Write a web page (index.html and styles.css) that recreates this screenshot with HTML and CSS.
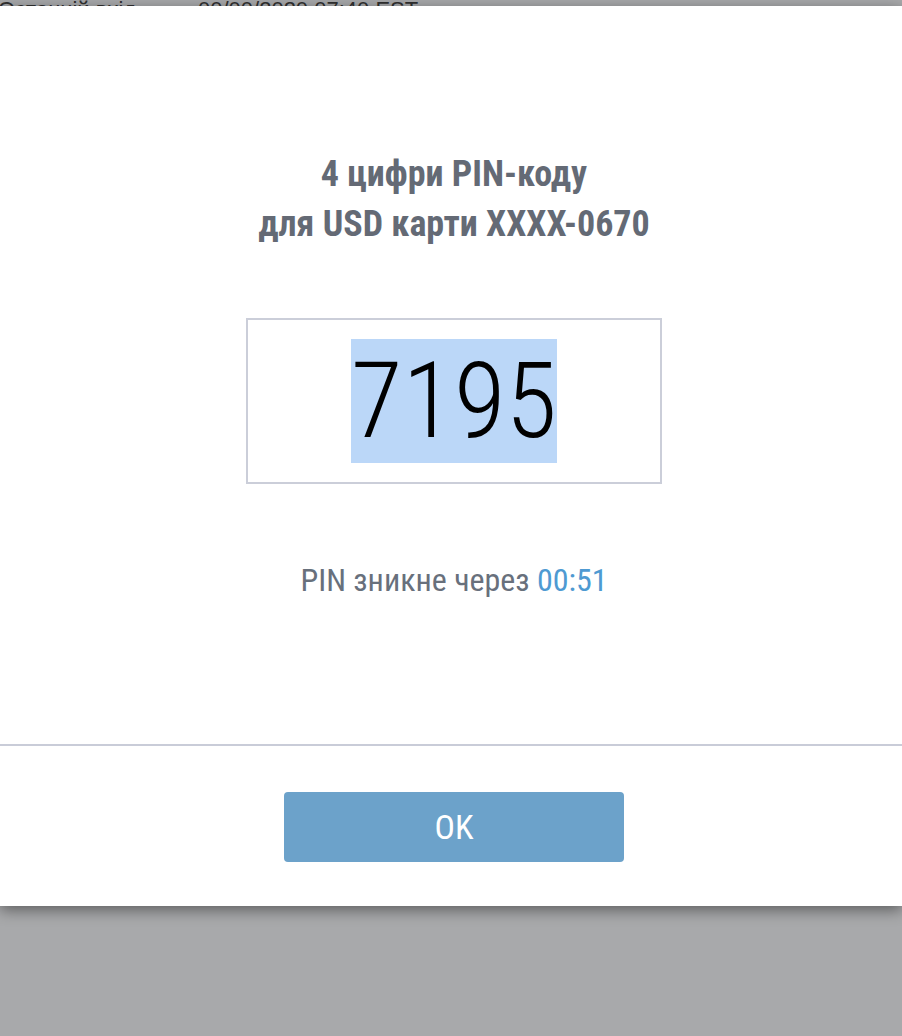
FILE: index.html
```html
<!DOCTYPE html>
<html lang="uk">
<head>
<meta charset="utf-8">
<title>PIN</title>
<link rel="stylesheet" href="styles.css">
</head>
<body>
<div class="page">
  <div class="topline">
    <span class="label">Останній вхід</span>
    <span class="date">00/00/2020 07:40 EST</span>
  </div>
</div>
<div class="modal">
  <div class="modal-body">
    <h2 class="title">4 цифри PIN-коду<br>для USD карти XXXX-0670</h2>
    <div class="pin-box"><span class="pin">7195</span></div>
    <p class="timer">PIN зникне через <span class="time">00:51</span></p>
  </div>
  <div class="modal-footer">
    <button class="ok">OK</button>
  </div>
</div>
</body>
</html>
```

FILE: styles.css
```css
html, body {
  margin: 0;
  padding: 0;
  height: 100%;
  overflow: hidden;
}
body {
  background: #a8a9ab;
  font-family: "Roboto Condensed", "Liberation Sans Narrow", "DejaVu Sans Condensed", Roboto, sans-serif;
}
.page {
  height: 100%;
}
.topline {
  display: flex;
  margin-top: -3px;
  font-family: "Liberation Sans", Arial, sans-serif;
  font-size: 22px;
  color: #303030;
  white-space: nowrap;
}
.label {
  width: 200px;
  margin-left: -2px;
}
.modal {
  position: absolute;
  top: 6px;
  left: 0;
  right: 0;
  height: 900px;
  background: #fff;
  box-shadow: 0 4px 14px rgba(0, 0, 0, 0.45);
  display: flex;
  flex-direction: column;
}
.modal-body {
  height: 740px;
  border-bottom: 2px solid #c9ccd8;
  display: flex;
  flex-direction: column;
  align-items: center;
  padding-left: 6px;
  box-sizing: border-box;
  padding-top: 143px;
}
.title {
  margin: 0;
  font-size: 36px;
  line-height: 50px;
  font-weight: 700;
  color: #646a75;
  text-align: center;
}
.pin-box {
  margin-top: 69px;
  width: 416px;
  height: 166px;
  box-sizing: border-box;
  border: 2px solid #cbced9;
  display: flex;
  align-items: center;
  justify-content: center;
}
.pin {
  font-size: 106px;
  font-weight: 300;
  color: #000;
  background: #bbd7f8;
  line-height: normal;
}
.timer {
  margin: 76px 0 0;
  font-size: 32px;
  line-height: 40px;
  color: #68707c;
}
.time {
  color: #4e9ad2;
}
.modal-footer {
  flex: 1;
  display: flex;
  justify-content: center;
  padding-left: 6px;
  padding-top: 46px;
  box-sizing: border-box;
}
.ok {
  width: 340px;
  height: 70px;
  border: none;
  border-radius: 4px;
  background: #6ca2ca;
  color: #fff;
  font-family: inherit;
  font-size: 34px;
  font-weight: 400;
  padding: 0;
}
```
